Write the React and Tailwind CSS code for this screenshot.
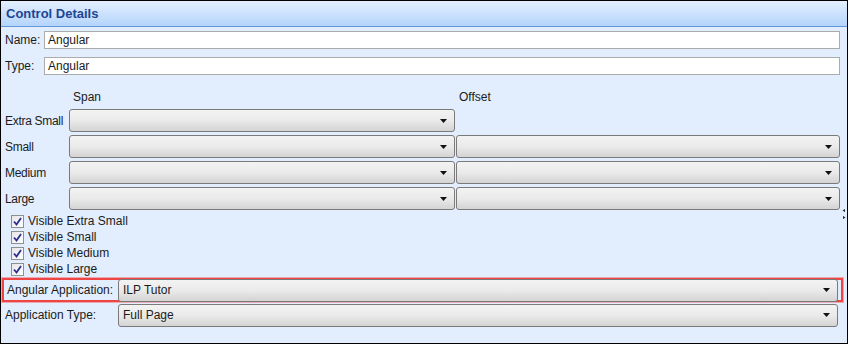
import React from "react";

const Arrow = () => (
  <svg width="7" height="4" viewBox="0 0 7 4" className="shrink-0">
    <path d="M0 0 L7 0 L3.5 4 Z" fill="#111" />
  </svg>
);

const Select = ({ value, className = "" }) => (
  <div
    className={`h-[23px] flex items-center justify-between pl-[4px] pr-[7px] rounded-[3px] border border-[#7a7a7a] bg-gradient-to-b from-[#f3f3f3] via-[#eaeaea] to-[#d4d4d4] ${className}`}
  >
    <span>{value}</span>
    <Arrow />
  </div>
);

const Check = ({ label }) => (
  <div className="flex items-center h-[16px]">
    <div className="w-[13px] h-[13px] ml-[10px] mr-[4px] border border-[#8e8f8f] bg-gradient-to-br from-[#e6e6e6] to-[#ffffff] flex items-center justify-center">
      <svg width="9" height="9" viewBox="0 0 9 9">
        <path d="M1 4.5 L3.5 7.5 L8 1" stroke="#2a2f8f" strokeWidth="1.8" fill="none" />
      </svg>
    </div>
    <span>{label}</span>
  </div>
);

const SizeRow = ({ label, offset = true }) => (
  <div className="flex items-center h-[23px] mb-[3px]">
    <div className="w-[68px] pl-[4px] whitespace-nowrap tracking-[-0.3px]">{label}</div>
    <Select className="w-[386px]" />
    {offset && <Select className="w-[384px] ml-[1px]" />}
  </div>
);

export default function App() {
  return (
    <div className="w-[848px] h-[344px] border border-black bg-[#e2eefe] font-['Segoe_UI','Liberation_Sans',sans-serif] text-[12px] text-[#1b1b1b] relative overflow-hidden">
      <div className="h-[26px] bg-gradient-to-b from-[#e4f0ff] to-[#b4d4fb] border-b border-[#6497d8] flex items-center pl-[5px]">
        <span className="text-[13px] font-bold text-[#1d4592]">Control Details</span>
      </div>

      <div className="pt-[4px]">
        <div className="flex items-center h-[18px]">
          <div className="w-[43px] pl-[4px]">Name:</div>
          <div className="w-[796px] h-[18px] bg-white border border-[#ababab] flex items-center pl-[3px]">Angular</div>
        </div>
        <div className="flex items-center h-[18px] mt-[8px]">
          <div className="w-[43px] pl-[4px]">Type:</div>
          <div className="w-[796px] h-[18px] bg-white border border-[#ababab] flex items-center pl-[3px]">Angular</div>
        </div>

        <div className="flex items-center h-[16px] mt-[14px] mb-[4px]">
          <div className="w-[72px]" />
          <div className="w-[386px]">Span</div>
          <div>Offset</div>
        </div>

        <SizeRow label="Extra Small" offset={false} />
        <SizeRow label="Small" />
        <SizeRow label="Medium" />
        <SizeRow label="Large" />

        <div className="mt-[1px]">
          <Check label="Visible Extra Small" />
          <Check label="Visible Small" />
          <Check label="Visible Medium" />
          <Check label="Visible Large" />
        </div>

        <div className="ml-[1px] mt-[1px] w-[841px] h-[24px] border-[2px] border-[#ee4444] shadow-[0_0_0_1px_rgba(245,120,120,0.6)] flex items-center">
          <div className="w-[114px] pl-[3px]">Angular Application:</div>
          <Select value="ILP Tutor" className="w-[720px] h-[18px]" />
        </div>

        <div className="flex items-center h-[18px] mt-[4px]">
          <div className="w-[117px] pl-[4px]">Application Type:</div>
          <Select value="Full Page" className="w-[720px] h-[18px]" />
        </div>
      </div>

      <svg className="absolute left-[840px] top-[207px]" width="6" height="14" viewBox="0 0 6 14">
        <path d="M4 1 L1.5 2.5 L4 4 Z" fill="#222" />
        <path d="M2 8 L4.5 9.5 L2 11 Z" fill="#222" />
      </svg>
    </div>
  );
}
